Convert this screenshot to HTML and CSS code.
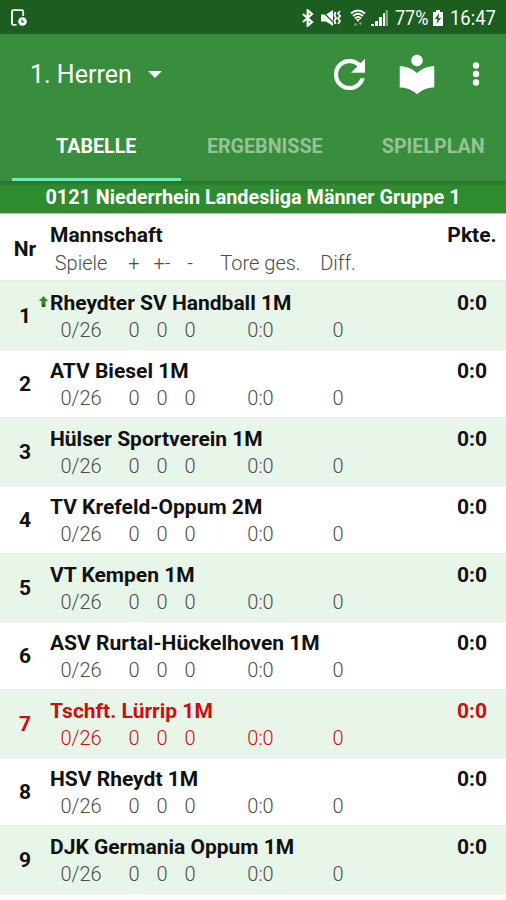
FILE: index.html
```html
<!DOCTYPE html>
<html lang="de">
<head>
<meta charset="utf-8">
<title>1. Herren</title>
<link rel="stylesheet" href="styles.css">
</head>
<body>
<div id="statusbar">
	<svg class="note" width="18" height="18" viewBox="0 0 18 18"><path d="M6.500 15.800H3.200q-1.200 0-1.200-1.200V2.400Q2 1.200 3.200 1.200H12q1.200 0 1.200 1.200V7" fill="none" stroke="#fff" stroke-width="1.800"/><circle cx="12.500" cy="12.500" r="4.300" fill="#fff"/><path d="M12 10.500v2.300h2" fill="none" stroke="#1b5e20" stroke-width="1.200"/></svg>
	<svg class="bluetooth" width="12" height="18" viewBox="0 0 12 18"><path d="M1 5l9 8-4.300 3.700V1.300L10 5l-9 8" fill="none" stroke="#fff" stroke-width="2.200"/></svg>
	<svg class="mute" width="20" height="18" viewBox="0 0 20 18"><path d="M0 5.500h5l7-4.500v16l-7-4.500H0z" fill="#fff"/><path d="M1 2l13 13" stroke="#1b5e20" stroke-width="1.300"/><path d="M14.500 3l-1 3 1.500 3-1.500 3 1 3M19 2l-2 2.500L19 7l-2 2.500 2 2.500-2 3" fill="none" stroke="#fff" stroke-width="1.800"/></svg>
	<svg class="wifi" width="16" height="18" viewBox="0 0 16 18"><path d="M1 4.500Q8-1.500 15 4.500M3 7q5-4.500 10 0M5 9.500q3-3 6 0" fill="none" stroke="#fff" stroke-width="2"/><path d="M6 10h4l-2 3z" fill="#fff"/><path d="M3.500 16.500l2-3 2 3zM8.500 13.500l2 3 2-3z" fill="#78a77b"/></svg>
	<svg class="signal" width="18" height="18" viewBox="0 0 18 18"><path d="M0 17v-2h3v2zM4 17v-5h3v5zM8 17V8h3v9zM12 17V4h2v13z" fill="#fff"/><path d="M14.500 17V1H17v16z" fill="#78a77b"/></svg>
	<span class="percent">77%</span>
	<svg class="battery" width="12" height="18" viewBox="0 0 12 18"><path d="M4 1h4v2h3v14H1V3h3z" fill="#fff"/><path d="M7 4L3 10h2.500L4.500 15 9 9H6.500z" fill="#1b5e20"/></svg>
	<span class="clock">16:47</span>
</div>
<header>
	<div class="toolbar">
		<span class="title">1. Herren</span>
		<span class="caret"></span>
		<svg class="refresh" width="31" height="31" viewBox="4 4 16 16"><path d="M17.650 6.350C16.200 4.900 14.210 4 12 4c-4.420 0-7.990 3.580-7.990 8s3.570 8 7.990 8c3.730 0 6.840-2.550 7.730-6h-2.080c-.82 2.330-3.040 4-5.650 4-3.310 0-6-2.690-6-6s2.690-6 6-6c1.660 0 3.140.69 4.220 1.780L13 11h7V4z" fill="#fff" stroke="#fff" stroke-width=".2"/></svg>
		<svg class="library" width="46" height="46" viewBox="0 0 24 24"><path d="M12 11.550C9.640 9.350 6.480 8 3 8v11c3.480 0 6.640 1.350 9 3.550 2.360-2.190 5.520-3.550 9-3.550V8c-3.480 0-6.640 1.350-9 3.550zM12 8c1.660 0 3-1.340 3-3s-1.340-3-3-3-3 1.340-3 3 1.340 3 3 3z" fill="#fff"/></svg>
		<svg class="more" width="8" height="26" viewBox="0 0 8 26"><circle cx="4" cy="4.500" r="3.200" fill="#fff"/><circle cx="4" cy="13" r="3.200" fill="#fff"/><circle cx="4" cy="21.500" r="3.200" fill="#fff"/></svg>
	</div>
	<nav>
		<a class="tab selected">TABELLE</a>
		<a class="tab">ERGEBNISSE</a>
		<a class="tab">SPIELPLAN</a>
	</nav>
</header>
<div class="league">0121 Niederrhein Landesliga Männer Gruppe 1</div>
<div id="table">
	<div class="row head">
		<div class="nr">Nr</div>
		<div class="team">
			<div class="name">Mannschaft</div>
			<div class="stats"><span>Spiele</span><span>+</span><span>+-</span><span>-</span><span>Tore ges.</span><span>Diff.</span></div>
		</div>
		<div class="points">Pkte.</div>
	</div>
	<div class="row">
		<div class="nr">1</div>
		<div class="team">
			<svg class="up" width="9" height="12" viewBox="0 0 9 12"><path d="M4.500 0L9 5H6.500v6h-4V5H0z" fill="#2e8b1e"/><path d="M3 11V8.500h3V11z" fill="#285c20"/></svg>
			<div class="name">Rheydter SV Handball 1M</div>
			<div class="stats"><span>0/26</span><span>0</span><span>0</span><span>0</span><span>0:0</span><span>0</span></div>
		</div>
		<div class="points">0:0</div>
	</div>
	<div class="row">
		<div class="nr">2</div>
		<div class="team">
			<div class="name">ATV Biesel 1M</div>
			<div class="stats"><span>0/26</span><span>0</span><span>0</span><span>0</span><span>0:0</span><span>0</span></div>
		</div>
		<div class="points">0:0</div>
	</div>
	<div class="row">
		<div class="nr">3</div>
		<div class="team">
			<div class="name">Hülser Sportverein 1M</div>
			<div class="stats"><span>0/26</span><span>0</span><span>0</span><span>0</span><span>0:0</span><span>0</span></div>
		</div>
		<div class="points">0:0</div>
	</div>
	<div class="row">
		<div class="nr">4</div>
		<div class="team">
			<div class="name">TV Krefeld-Oppum 2M</div>
			<div class="stats"><span>0/26</span><span>0</span><span>0</span><span>0</span><span>0:0</span><span>0</span></div>
		</div>
		<div class="points">0:0</div>
	</div>
	<div class="row">
		<div class="nr">5</div>
		<div class="team">
			<div class="name">VT Kempen 1M</div>
			<div class="stats"><span>0/26</span><span>0</span><span>0</span><span>0</span><span>0:0</span><span>0</span></div>
		</div>
		<div class="points">0:0</div>
	</div>
	<div class="row">
		<div class="nr">6</div>
		<div class="team">
			<div class="name">ASV Rurtal-Hückelhoven 1M</div>
			<div class="stats"><span>0/26</span><span>0</span><span>0</span><span>0</span><span>0:0</span><span>0</span></div>
		</div>
		<div class="points">0:0</div>
	</div>
	<div class="row own">
		<div class="nr">7</div>
		<div class="team">
			<div class="name">Tschft. Lürrip 1M</div>
			<div class="stats"><span>0/26</span><span>0</span><span>0</span><span>0</span><span>0:0</span><span>0</span></div>
		</div>
		<div class="points">0:0</div>
	</div>
	<div class="row">
		<div class="nr">8</div>
		<div class="team">
			<div class="name">HSV Rheydt 1M</div>
			<div class="stats"><span>0/26</span><span>0</span><span>0</span><span>0</span><span>0:0</span><span>0</span></div>
		</div>
		<div class="points">0:0</div>
	</div>
	<div class="row">
		<div class="nr">9</div>
		<div class="team">
			<div class="name">DJK Germania Oppum 1M</div>
			<div class="stats"><span>0/26</span><span>0</span><span>0</span><span>0</span><span>0:0</span><span>0</span></div>
		</div>
		<div class="points">0:0</div>
	</div>
</div>
</body>
</html>
```
FILE: styles.css
```css
html,body {
	margin: 0;
	padding: 0;
	width: 100%;
	height: 100%;
	overflow: hidden;
	font-family: Roboto, sans-serif;
	background: #fff;
	cursor: default;
}
svg {
	display: block;
	flex: none;
}

#statusbar {
	box-sizing: border-box;
	display: flex;
	align-items: center;
	height: 34px;
	padding: 1px 10px 0;
	background: #1b5e20;
	color: #fff;
	font-size: 20px;
	white-space: nowrap;
}
#statusbar .bluetooth {
	margin-left: auto;
}
#statusbar .mute {
	margin-left: 7px;
}
#statusbar .wifi {
	margin-left: 9px;
}
#statusbar .signal {
	margin-left: 5px;
}
#statusbar .percent {
	margin-left: 6px;
	width: 33px;
	transform: scaleX(.9);
	transform-origin: left;
}
#statusbar .battery {
	margin-left: 4px;
}
#statusbar .clock {
	margin-left: 6px;
	width: 46px;
	transform: scaleX(.92);
	transform-origin: left;
}

header {
	height: 147px;
	background: #388e3c;
	color: #fff;
}
.toolbar {
	display: flex;
	align-items: center;
	height: 80px;
	padding: 0 26px 0 30px;
}
.title {
	font-size: 25px;
}
.caret {
	margin-left: 16px;
	border: 7px solid transparent;
	border-top-color: #fff;
	border-bottom: 0;
}
.refresh {
	margin-left: auto;
}
.library {
	margin-left: 29px;
}
.more {
	margin-left: 32px;
}
nav {
	display: flex;
	height: 67px;
	padding-left: 12px;
}
.tab {
	box-sizing: border-box;
	flex: none;
	width: 168.5px;
	height: 67px;
	line-height: 66px;
	text-align: center;
	font-size: 19.7px;
	font-weight: 700;
	color: #95c397;
}
.tab.selected {
	color: #fff;
	border-bottom: 3px solid #69f0ae;
}

.league {
	box-sizing: border-box;
	height: 33px;
	line-height: 34px;
	background: linear-gradient(#2a6d2d, #2e8b2e 5px);
	border-bottom: 1px solid #a5cfa5;
	color: #fff;
	text-align: center;
	font-size: 19.8px;
	font-weight: 700;
}

.row {
	box-sizing: border-box;
	display: flex;
	height: 68px;
	padding-top: 7px;
	border-bottom: 1px solid #e8e8e8;
	font-size: 21px;
	line-height: 28px;
	color: #111;
}
.row:nth-child(even) {
	background: #e8f5e9;
}
.row.head {
	height: 67px;
}
.row.head .nr {
	padding-top: 14px;
}
.row.head .stats {
	line-height: 29px;
}
.row.head + .row {
	height: 69px;
	padding-top: 8px;
}
.nr {
	width: 50px;
	padding-top: 13px;
	text-align: center;
	font-weight: 700;
}
.team {
	position: relative;
	flex: 1;
}
.name {
	font-weight: 700;
	white-space: nowrap;
}
.stats {
	display: grid;
	grid-template-columns: 70px 28px 28px 28px 113px 42px;
	font-size: 20px;
	line-height: 27px;
	font-weight: 300;
	color: #4c4c4c;
	text-align: center;
	white-space: nowrap;
}
.stats span:first-child {
	padding-right: 8px;
}
.points {
	width: 68px;
	text-align: center;
	font-weight: 700;
}
.up {
	position: absolute;
	left: -11px;
	top: 7px;
}
.own,
.own .stats {
	color: #d00d0d;
}
```
